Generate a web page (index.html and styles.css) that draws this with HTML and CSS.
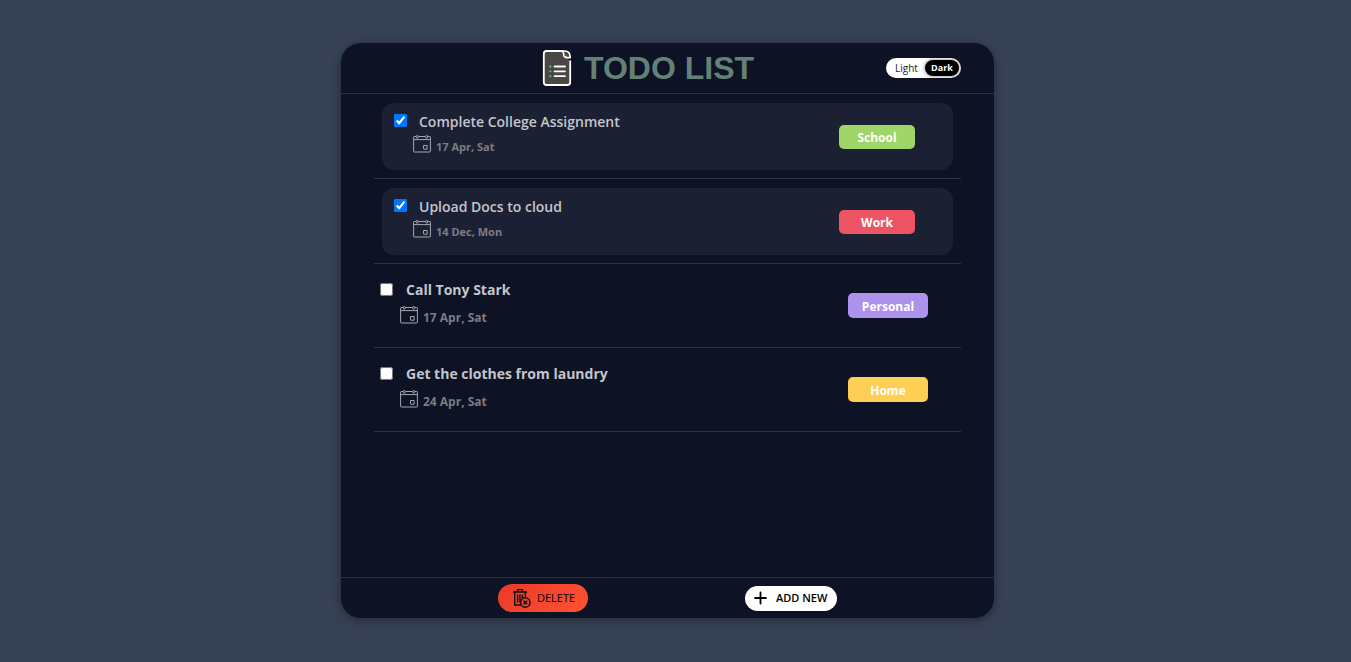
FILE: index.html
```
<!DOCTYPE html>
<html lang="en">
<head>
<meta charset="utf-8">
<meta name="viewport" content="width=device-width, initial-scale=1">
<title>Todo List</title>
<link rel="stylesheet" href="styles.css">
</head>
<body>
<svg class="sprite" aria-hidden="true">
  <symbol id="calendar" viewBox="0 0 18 18">
    <g fill="none" stroke="currentColor">
      <path d="M3.2 1.5H1.2Q.6 1.5.6 2.1V16.4Q.6 17 1.2 17H16.8Q17.4 17 17.4 16.4V2.1Q17.4 1.5 16.8 1.5H14.8M5.5 1.5H12.5M.6 4.6H17.4"/>
      <ellipse cx="4.3" cy="1.8" rx="1" ry="1.5"/><ellipse cx="13.7" cy="1.8" rx="1" ry="1.5"/>
      <path d="M10.5 10.5h3.6v3.7h-3.2q-.4 0-.4-.4z"/>
    </g>
  </symbol>
</svg>
<main class="app">
  <header class="header">
    <div class="brand">
      <svg class="logo" viewBox="0 0 30 38" aria-hidden="true">
        <path d="M20.5 2H4.5Q1.8 2 1.8 4.7V33.3Q1.8 36 4.5 36H25.5Q28.2 36 28.2 33.3V12.2" fill="#4b4745" stroke="#fff" stroke-width="1.8" stroke-linecap="round"/>
        <path d="M20.5 2H22.5Q28.3 2 28.3 8.6H25.5Q21.6 8.6 21.6 5Q21.6 2.8 20.5 2Z" fill="#4b4745" stroke="#fff" stroke-width="1.7" stroke-linejoin="round"/>
        <path d="M12.5 17.5h10.5M12.5 22.3h10.5M12.5 27.1h10.5" stroke="#fff" stroke-width="1.8" stroke-linecap="round"/>
        <path d="M8 17.5h.6M8 22.3h.6M8 27.1h.6" stroke="#2fd39c" stroke-width="1.8" stroke-linecap="round"/>
      </svg>
      <h1 class="title">TODO LIST</h1>
    </div>
    <div class="theme" role="group" aria-label="Theme">
      <button type="button" class="theme-option">Light</button>
      <button type="button" class="theme-option theme-active" aria-pressed="true">Dark</button>
    </div>
  </header>
  <ul class="list">
    <li class="item">
      <div class="task task-done">
        <input class="check" type="checkbox" id="t1" checked>
        <div class="body"><label class="name" for="t1">Complete College Assignment</label>
          <div class="date"><svg class="calendar" aria-hidden="true"><use href="#calendar"/></svg><span>17 Apr, Sat</span></div></div>
        <span class="tag school">School</span>
      </div>
    </li>
    <li class="item">
      <div class="task task-done">
        <input class="check" type="checkbox" id="t2" checked>
        <div class="body"><label class="name" for="t2">Upload Docs to cloud</label>
          <div class="date"><svg class="calendar" aria-hidden="true"><use href="#calendar"/></svg><span>14 Dec, Mon</span></div></div>
        <span class="tag work">Work</span>
      </div>
    </li>
    <li class="item">
      <div class="task">
        <input class="check" type="checkbox" id="t3">
        <div class="body"><label class="name" for="t3">Call Tony Stark</label>
          <div class="date"><svg class="calendar" aria-hidden="true"><use href="#calendar"/></svg><span>17 Apr, Sat</span></div></div>
        <span class="tag personal">Personal</span>
      </div>
    </li>
    <li class="item">
      <div class="task">
        <input class="check" type="checkbox" id="t4">
        <div class="body"><label class="name" for="t4">Get the clothes from laundry</label>
          <div class="date"><svg class="calendar" aria-hidden="true"><use href="#calendar"/></svg><span>24 Apr, Sat</span></div></div>
        <span class="tag home">Home</span>
      </div>
    </li>
  </ul>
  <footer class="footer">
    <button type="button" class="action delete">
      <svg class="trash" viewBox="0 0 20 20" aria-hidden="true">
        <path d="M1 4h14M5.5 3.8V1.6h5v2.2M2.7 4.5V17h7M13.4 4.5V9M5.6 6.5v8M8 6.5v8M10.4 6.5v3.5" fill="none" stroke="#160b0b" stroke-width="1.4"/>
        <circle cx="13.3" cy="14.5" r="4.7" fill="#f0412d" stroke="#160b0b" stroke-width="1.5"/>
        <path d="M11.5 12.7l3.6 3.6M15.1 12.7l-3.6 3.6" stroke="#160b0b" stroke-width="1.5"/>
      </svg>DELETE</button>
    <button type="button" class="action add">
      <svg class="plus" viewBox="0 0 14 14" aria-hidden="true"><path d="M6.5 1.5v11M1 7h11" stroke="#000" stroke-width="1.8" stroke-linecap="round"/></svg>ADD NEW</button>
  </footer>
</main>
</body>
</html>
```
FILE: styles.css
```
* { box-sizing: border-box; }
body {
  margin: 0;
  min-height: 100vh;
  padding: 43px 16px 44px 0;
  display: flex;
  justify-content: center;
  background: #374155;
  font-family: "Open Sans", "Noto Sans", sans-serif;
}
.sprite { position: absolute; width: 0; height: 0; }
.app {
  width: 49%;
  min-width: 560px;
  max-width: 653px;
  display: flex;
  flex-direction: column;
  background: #0d1225;
  border-radius: 20px;
  box-shadow: 0 2px 8px rgba(0, 0, 0, 0.4);
}
.header {
  display: grid;
  grid-template-columns: 168px auto 1fr;
  align-items: center;
  height: 51px;
  padding: 0 33px;
  border-bottom: 1px solid #2c3042;
}
.brand { grid-column: 2; display: flex; align-items: center; gap: 12px; }
.logo { width: 30px; height: 38px; }
.title {
  margin: 0;
  font: bold 32px/40px "Liberation Sans", Arial, sans-serif;
  color: #658076;
}
.theme {
  justify-self: end;
  display: flex;
  width: 75px;
  height: 20px;
  padding: 2px;
  border-radius: 10px;
  background: #fff;
}
.theme-option {
  flex: 1;
  padding: 0;
  border: 0;
  border-radius: 8px;
  background: none;
  font: 10px/16px "Open Sans", sans-serif;
  color: #222;
}
.theme-active {
  flex: none;
  width: 34px;
  background: #000;
  color: #fff;
  font-size: 9px;
  font-weight: 700;
  box-shadow: 0 0 4px rgba(0, 0, 0, 0.5);
}
.list { flex: 1; margin: 0; padding: 0 33px; list-style: none; }
.item { border-bottom: 1px solid #2f3345; }
.task { display: flex; align-items: flex-start; min-height: 83px; padding: 15px 33px 0 6px; }
.task-done {
  min-height: 67px;
  margin: 9px 8px 8px;
  padding: 8px 38px 0 12px;
  border-radius: 12px;
  background: #1c2033;
}
.check { flex: none; width: 13px; height: 13px; margin: 4px 7px 0 0; }
.task-done .check { margin: 3px 6px 0 0; }
.body { flex: 1; }
.name {
  display: block;
  margin-left: 6px;
  font-size: 14px;
  line-height: 22px;
  font-weight: 700;
  color: #c4c5cb;
}
.date {
  display: flex;
  gap: 5px;
  margin-top: 5px;
  font-size: 12px;
  line-height: 24px;
  font-weight: 700;
  color: #7b7c84;
}
.task-done .name { font-weight: 600; color: #c4c5cb; }
.task-done .date { margin-top: 2px; font-size: 11px; }
.calendar { width: 18px; height: 18px; color: #a4a6af; }
.tag {
  width: 80px;
  height: 25px;
  margin-top: 14px;
  border-radius: 5px;
  font-size: 12px;
  line-height: 27px;
  font-weight: 700;
  text-align: center;
  color: #fff;
}
.task-done .tag { width: 76px; height: 24px; line-height: 25px; }
.school { background: #a0d568; }
.work { background: #ed5564; }
.personal { background: #ac92eb; }
.home { background: #ffce54; }
.footer {
  display: flex;
  justify-content: space-evenly;
  align-items: center;
  height: 41px;
  border-top: 1px solid #2c3042;
}
.action {
  display: flex;
  align-items: center;
  border: 0;
  border-radius: 14px;
  font: 600 11px/20px "Open Sans", sans-serif;
  color: #000;
}
.delete {
  width: 90px;
  height: 28px;
  padding: 0 0 0 14px;
  gap: 5px;
  font-weight: 400;
  background: linear-gradient(135deg, #e93a29, #ff5332);
}
.add { width: 92px; height: 25px; padding: 0 0 0 9px; gap: 8px; background: #fff; }
.trash { width: 20px; height: 20px; }
.plus { width: 14px; height: 14px; }
```
